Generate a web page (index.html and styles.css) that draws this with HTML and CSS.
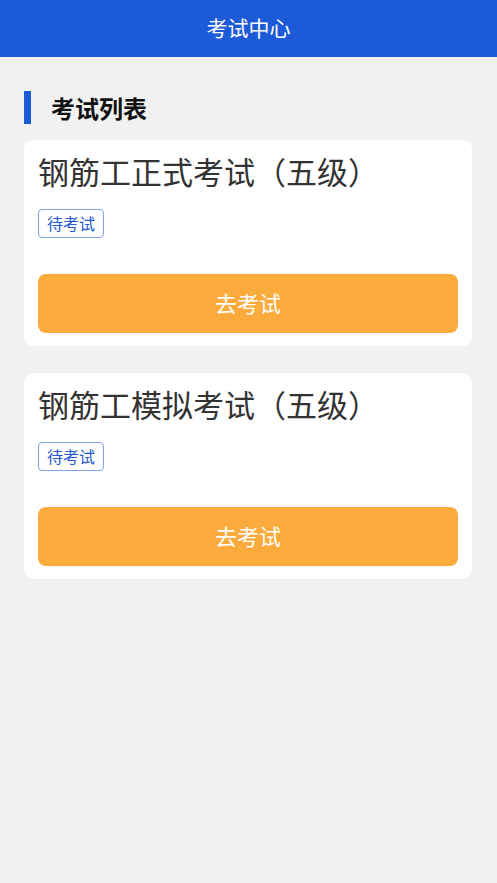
FILE: index.html
```html
<!DOCTYPE html>
<html lang="zh">
<head>
<meta charset="utf-8">
<link rel="stylesheet" href="styles.css">
</head>
<body>
<header class="topbar">考试中心</header>
<main class="content">
  <h2 class="section-title">考试列表</h2>
  <div class="card">
    <div class="card-title">钢筋工正式考试（五级）</div>
    <span class="tag">待考试</span>
    <button class="go-btn">去考试</button>
  </div>
  <div class="card">
    <div class="card-title">钢筋工模拟考试（五级）</div>
    <span class="tag">待考试</span>
    <button class="go-btn">去考试</button>
  </div>
</main>
</body>
</html>
```
FILE: styles.css
```css
html, body {
  margin: 0;
  padding: 0;
  background: #f1f1f1;
  font-family: "Noto Sans CJK SC", "Noto Sans", sans-serif;
}
.topbar {
  height: 57px;
  background: #1d5ad7;
  color: #ffffff;
  font-size: 21px;
  line-height: 1;
  padding-bottom: 3px;
  box-sizing: border-box;
  display: flex;
  align-items: center;
  justify-content: center;
}
.content {
  padding: 34px 25px 0 24px;
}
.section-title {
  margin: 0 0 16px 0;
  height: 33px;
  border-left: 7px solid #1d5ad7;
  padding-left: 20px;
  font-size: 24px;
  font-weight: bold;
  color: #111111;
  display: flex;
  align-items: center;
  line-height: 1;
}
.card {
  background: #ffffff;
  border-radius: 9px;
  padding: 9px 14px 13px 14px;
  display: flex;
  flex-direction: column;
  align-items: flex-start;
  margin-bottom: 27px;
}
.card-title {
  font-size: 31px;
  line-height: 44px;
  color: #333333;
}
.tag {
  margin-top: 16px;
  height: 27px;
  padding: 0 8px;
  border: 1px solid #7fa2ea;
  border-radius: 4px;
  color: #2358cf;
  font-size: 16px;
  line-height: 27px;
}
.go-btn {
  margin-top: 36px;
  width: 100%;
  height: 59px;
  border: none;
  border-radius: 8px;
  background: #fbaa3c;
  color: #ffffff;
  font-family: inherit;
  font-size: 22px;
  line-height: 1;
  padding: 0 0 4px 0;
}
```
